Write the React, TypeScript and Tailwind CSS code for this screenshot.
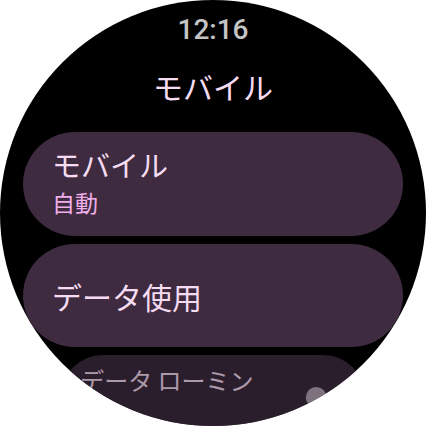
import React from "react";

const jp = { fontFamily: '"Noto Sans CJK JP", "Noto Sans", sans-serif' };

export default function App() {
  return (
    <div className="w-[426px] h-[426px] bg-white">
      <div className="w-[426px] h-[426px] rounded-full overflow-hidden bg-black flex flex-col items-center">
        <div
          className="mt-[12px] h-[36px] leading-[36px] text-[28px] font-medium text-[#c4c4c4]"
          style={{ fontFamily: 'Roboto, "Liberation Sans", sans-serif' }}
        >
          12:16
        </div>
        <div className="mt-[16px] h-[44px] leading-[44px] text-[30px] text-[#f6dcf2]" style={jp}>
          モバイル
        </div>
        <div className="mt-[24px] flex flex-col items-center gap-[8px]">
          <div className="w-[380px] h-[104px] rounded-full bg-[#3e2b3f] flex flex-col pt-[15px] pl-[29px]" style={jp}>
            <div className="text-[29px] leading-[34px] text-[#f6dcf2]">モバイル</div>
            <div className="mt-[5px] text-[23px] leading-[32px] text-[#f0aeea]">自動</div>
          </div>
          <div className="w-[380px] h-[103px] rounded-full bg-[#3e2b3f] flex items-center pl-[29px]" style={jp}>
            <div className="text-[30px] leading-[40px] text-[#f6dcf2]">データ使用</div>
          </div>
          <div className="w-[380px] h-[104px] origin-top scale-[0.8] opacity-70">
            <div className="relative w-[380px] h-[104px] rounded-full bg-[#3e2b3f] flex items-center pl-[24px]" style={jp}>
              <div className="text-[30px] leading-[40px] text-[#f6dcf2] mt-[-2px]">
                データ ローミン
                <br />グ
              </div>
              <div className="absolute left-[306px] top-[40px] w-[26px] h-[26px] rounded-full bg-[#b3a3b3]" />
            </div>
          </div>
        </div>
      </div>
    </div>
  );
}
